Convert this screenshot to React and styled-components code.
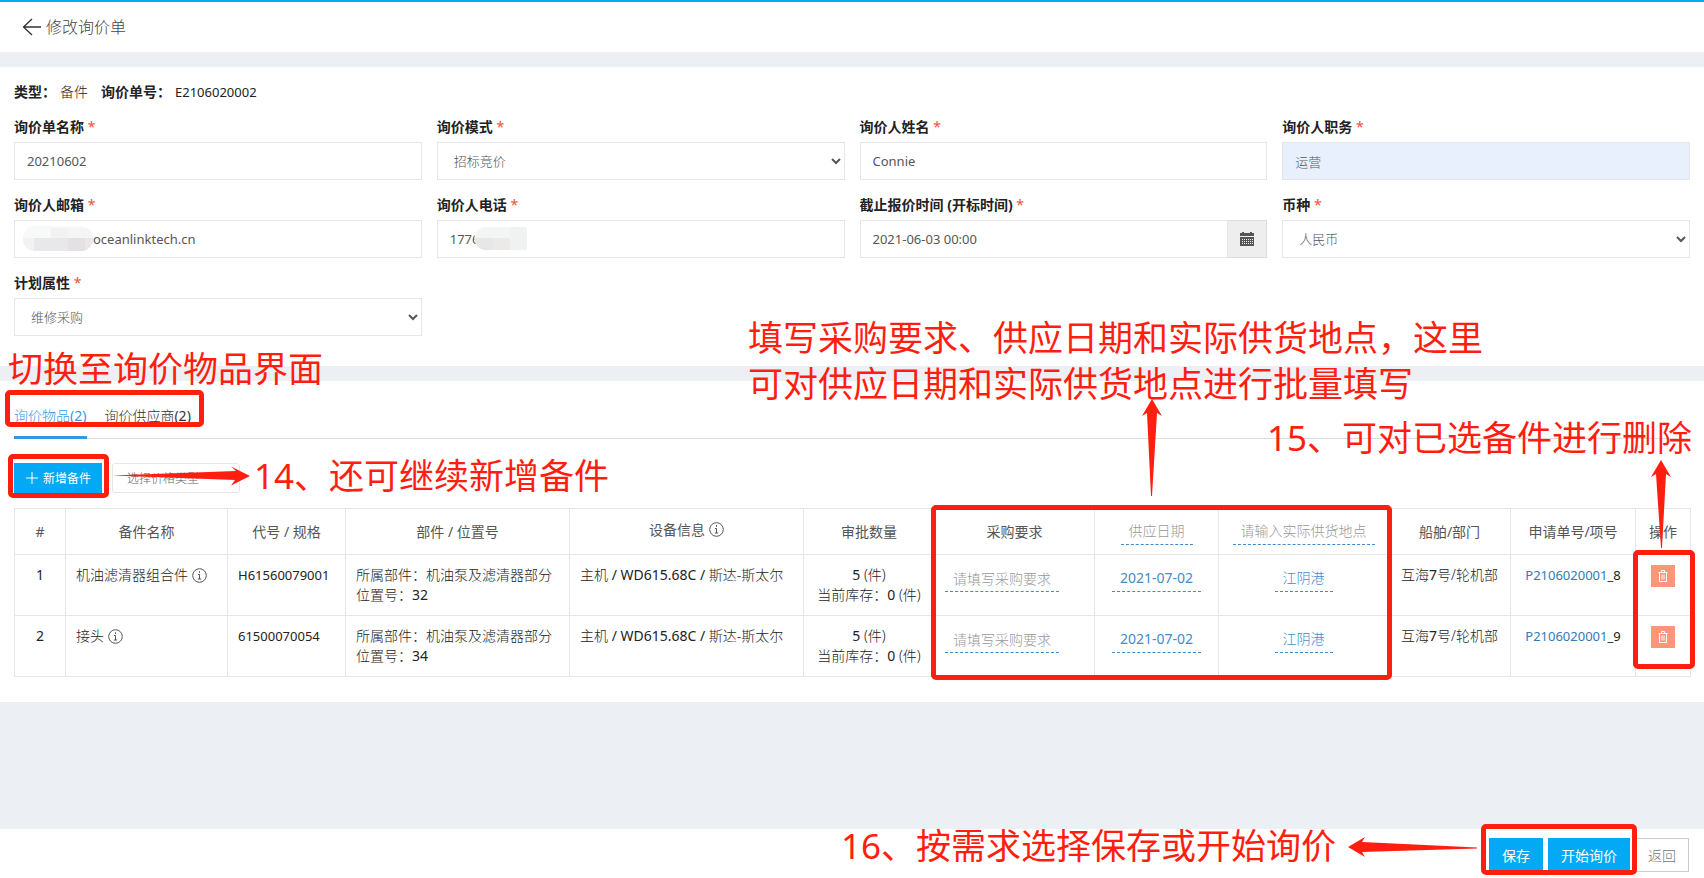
import React, { useState } from "react";
import styled, { createGlobalStyle } from "styled-components";

const RED = "#ff1e10";
const BLUE = "#03a9f4";

const GlobalStyle = createGlobalStyle`
    * {
        box-sizing: border-box;
    }
    body {
        margin: 0;
        background: #ecf0f5;
        color: #222;
        font: 14px/20px "Noto Sans", "Noto Sans CJK SC", sans-serif;
    }
    button, input, select {
        font-family: inherit;
    }
`;

const Page = styled.div`
    display: flex;
    flex-direction: column;
    gap: 15px;
    min-height: 100vh;
    overflow-x: hidden;
`;

const TopBar = styled.header`
    display: flex;
    align-items: center;
    gap: 5px;
    height: 52px;
    padding: 0 22px;
    border-top: 2px solid ${BLUE};
    background: #fff;
`;

const BackButton = styled.button`
    display: flex;
    padding: 0;
    border: 0;
    background: none;
    cursor: pointer;
`;

const Title = styled.h1`
    margin: 0;
    font-size: 16px;
    font-weight: 300;
    color: #444;
`;

const Panel = styled.section`
    position: relative;
    padding: ${(props) => props.$pad};
    background: #fff;
`;

const Summary = styled.dl`
    display: flex;
    align-items: center;
    gap: 4px;
    margin: 0 0 15px;
`;

const SummaryName = styled.dt`
    font-weight: 700;
`;

const SummaryValue = styled.dd`
    margin: 0 9px 0 0;
    font-size: ${(props) => (props.$code ? "13px" : "14px")};
    font-weight: ${(props) => (props.$code ? 400 : 300)};
`;

const FormGrid = styled.div`
    display: grid;
    grid-template-columns: repeat(4, 1fr);
    gap: 15px;
`;

const Field = styled.div`
    display: flex;
    flex-direction: column;
    gap: 5px;
`;

const Label = styled.label`
    font-weight: 700;
`;

const Star = styled.span`
    font-weight: 400;
    color: #f0523c;
`;

const Control = styled.div`
    position: relative;
    display: flex;
`;

const TextInput = styled.input`
    flex: 1;
    min-width: 0;
    height: 38px;
    padding: 0 12px 0 ${(props) => props.$indent || "12px"};
    border: 1px solid #e4e7ea;
    border-radius: 0;
    background: ${(props) => (props.$filled ? "#e8f0fe" : "#fff")};
    color: #565656;
    font-size: 13px;
    font-weight: ${(props) => (props.$filled ? 300 : 400)};
`;

const Select = styled.select`
    flex: 1;
    min-width: 0;
    height: 38px;
    padding: 0 12px;
    border: 1px solid #e4e7ea;
    border-radius: 0;
    background: #fff;
    color: #565656;
    font-size: 13px;
    font-weight: 300;
`;

const DateButton = styled.button`
    display: flex;
    align-items: center;
    justify-content: center;
    width: 39px;
    padding: 0;
    border: 1px solid #ddd;
    border-left: 0;
    background: #eee;
    color: #555;
`;

const Mask = styled.svg`
    position: absolute;
    top: 6px;
    left: ${(props) => props.$left};
`;

const Tabs = styled.nav`
    display: flex;
    gap: 17px;
    margin-bottom: 24px;
    box-shadow: inset 0 -1px #ddd;
`;

const Tab = styled.button`
    height: 34px;
    padding: 0 1px 9px 0;
    border: 0;
    border-bottom: 3px solid ${(props) => (props.$active ? "#3498e5" : "transparent")};
    background: none;
    color: ${(props) => (props.$active ? "#3498e5" : "#333")};
    font-size: 14px;
    font-weight: 300;
    line-height: 20px;
    cursor: pointer;
`;

const TabCount = styled.span`
    font-weight: 400;
`;

const Tools = styled.div`
    display: flex;
    gap: 10px;
    margin-bottom: 15px;
`;

const AddButton = styled.button`
    display: flex;
    align-items: center;
    gap: 5px;
    height: 30px;
    padding: 0 11px 0 12px;
    border: 0;
    background: ${BLUE};
    color: #fff;
    font-size: 12px;
`;

const PriceType = styled.select`
    appearance: none;
    width: 128px;
    height: 30px;
    padding: 0 14px;
    border: 1px solid #e4e7ea;
    border-radius: 3px;
    background: #fff;
    color: #666;
    font-size: 12px;
    font-weight: 300;
`;

const Table = styled.table`
    width: 100%;
    border-collapse: collapse;
    table-layout: fixed;
`;

const Th = styled.th`
    height: 46px;
    padding: 0;
    border: 1px solid #e4e7ea;
    color: #555;
    font-weight: 400;
    white-space: nowrap;
`;

const Td = styled.td`
    height: 61px;
    padding: 10px;
    border: 1px solid #e4e7ea;
    font-size: 14px;
    font-weight: 300;
    text-align: ${(props) => props.$align || "left"};
    vertical-align: top;
    white-space: nowrap;
`;

const Line = styled.div`
    display: flex;
    align-items: center;
    justify-content: ${(props) => (props.$center ? "center" : "flex-start")};
    gap: 4px;
    padding-bottom: ${(props) => (props.$center ? "4px" : 0)};
`;

const Code = styled.span`
    font-size: 13px;
    font-weight: 400;
`;

const Num = styled.span`
    font-weight: 400;
`;

const RefLink = styled.a`
    color: #337ab7;
    text-decoration: none;
`;

const Editable = styled.button`
    padding: 3px 8px;
    border: 0;
    border-bottom: 1px dashed #428bca;
    background: none;
    color: ${(props) => (props.$empty ? "#999" : "#428bca")};
    font-size: 14px;
    font-weight: ${(props) => (props.$light ? 300 : 400)};
    line-height: 20px;
    vertical-align: top;
`;

const EditInput = styled.input`
    display: block;
    width: 114px;
    padding: 3px 8px;
    border: 0;
    border-bottom: 1px dashed #428bca;
    background: none;
    font-size: 14px;
    font-weight: 300;
    line-height: 20px;
    height: 27px;

    &::placeholder {
        color: #999;
        opacity: 1;
    }
`;

const DeleteButton = styled.button`
    display: inline-flex;
    align-items: center;
    justify-content: center;
    width: 24px;
    height: 22px;
    padding: 0;
    border: 0;
    background: #fb9678;
    vertical-align: top;
`;

const Footer = styled.footer`
    position: relative;
    display: flex;
    justify-content: flex-end;
    align-items: center;
    gap: 5px;
    height: 49px;
    margin-top: auto;
    padding: 2px 15px 0;
    background: #fff;
`;

const FooterButton = styled.button`
    height: 34px;
    padding: 0 12px;
    border: 1px solid ${(props) => (props.$primary ? BLUE : "#ccc")};
    background: ${(props) => (props.$primary ? BLUE : "#fff")};
    color: ${(props) => (props.$primary ? "#fff" : "#777")};
    font-size: 14px;
    font-weight: ${(props) => (props.$primary ? 400 : 300)};
`;

// tutorial marks which lie over the page
const Frame = styled.div`
    position: absolute;
    top: ${(props) => props.$top};
    left: ${(props) => props.$left};
    right: ${(props) => props.$right};
    width: ${(props) => props.$width};
    height: ${(props) => props.$height};
    border: 5px solid ${RED};
    border-radius: 5px;
    pointer-events: none;
`;

const Note = styled.p`
    position: absolute;
    top: ${(props) => props.$top};
    left: ${(props) => props.$left};
    right: ${(props) => props.$right};
    margin: 0;
    color: ${RED};
    font-size: 35px;
    line-height: 46px;
    white-space: nowrap;
    pointer-events: none;
`;

const Arrow = styled.svg`
    position: absolute;
    top: ${(props) => props.$top};
    left: ${(props) => props.$left};
    right: ${(props) => props.$right};
    fill: ${RED};
    pointer-events: none;
`;

const InfoIcon = () => (
    <svg width="15" height="15" viewBox="0 0 15 15" fill="none" stroke="#555">
        <circle cx="7.5" cy="7.5" r="6.8" />
        <path d="M7.5 3.2v1.6M6 6.5h1.5v4.5M5.8 11h3.4" />
    </svg>
);

const TrashIcon = () => (
    <svg width="10" height="12" viewBox="0 0 10 12" fill="none" stroke="#fff">
        <path d="M0.5 2.5h9M3.5 2V.5h3V2M1.5 3v8.5h7V3M4 4.5v5M6 4.5v5" />
    </svg>
);

const CalendarIcon = () => (
    <svg width="14" height="14" viewBox="0 0 14 14">
        <path fill="#555" d="M0 1h2V0h2v1h6V0h2v1h2v3H0zM0 5h14v9H0z" />
        <path stroke="#eee" strokeDasharray="1 1" d="M2 7.5h11M2 9.5h11M2 11.5h11" />
    </svg>
);

const EmailMask = () => (
    <Mask $left="9px" width="70" height="25" viewBox="0 0 70 25">
        <clipPath id="email-mask"><rect width="70" height="25" rx="12" /></clipPath>
        <g clipPath="url(#email-mask)">
            <path fill="#f8f9f9" d="M0 0h70v25H0z" />
            <path fill="#f2f2f3" d="M28 2h17v10H28zM0 12h11v13H0z" />
            <path fill="#f5f5f6" d="M45 2h25v10H45z" />
            <path fill="#e8e7e9" d="M11 12h59v13H11z" />
            <path fill="#e3e1e4" d="M45 12h17v13H45z" />
        </g>
    </Mask>
);

const PhoneMask = () => (
    <Mask $left="37px" width="53" height="25" viewBox="0 0 53 25">
        <clipPath id="phone-mask"><path d="M12 1h39a2 2 0 0 1 2 2v19a2 2 0 0 1-2 2H12a11.5 11.5 0 0 1 0-23z" /></clipPath>
        <g clipPath="url(#phone-mask)">
            <path fill="#f3f4f4" d="M0 0h53v25H0z" />
            <path fill="#e6e8e8" d="M0 12h19v13H0z" />
            <path fill="#ebeae9" d="M19 12h17v13H19z" />
            <path fill="#f0f1f1" d="M36 0h17v25H36z" />
        </g>
    </Mask>
);

const fields = [
    { id: "name", label: "询价单名称", value: "20210602" },
    { id: "mode", label: "询价模式", type: "select", value: "招标竞价" },
    { id: "person", label: "询价人姓名", value: "Connie" },
    { id: "job", label: "询价人职务", value: "运营", filled: true },
    { id: "email", label: "询价人邮箱", value: "oceanlinktech.cn", indent: "78px", mask: <EmailMask /> },
    { id: "phone", label: "询价人电话", value: "1776", mask: <PhoneMask /> },
    { id: "deadline", label: "截止报价时间 (开标时间)", type: "date", value: "2021-06-03 00:00" },
    { id: "currency", label: "币种", type: "select", value: "人民币" },
    { id: "plan", label: "计划属性", type: "select", value: "维修采购" },
];

const columns = [51, 162, 118, 224, 234, 131, 160, 124, 170, 122, 125, 55];

const items = [
    { id: 1, name: "机油滤清器组合件", code: "H61560079001", position: "32", line: "8" },
    { id: 2, name: "接头", code: "61500070054", position: "34", line: "9" },
];

const FormField = ({ field }) => (
    <Field>
        <Label htmlFor={field.id}>{field.label} <Star>*</Star></Label>
        <Control>
            {field.type === "select" ? (
                <Select id={field.id}>
                    <option>{field.value}</option>
                </Select>
            ) : (
                <TextInput id={field.id} defaultValue={field.value} $filled={field.filled} $indent={field.indent} />
            )}
            {field.type === "date" && <DateButton aria-label="选择日期"><CalendarIcon /></DateButton>}
            {field.mask}
        </Control>
    </Field>
);

const ItemRow = ({ item }) => (
    <tr>
        <Td $align="center"><Num>{item.id}</Num></Td>
        <Td><Line>{item.name}<InfoIcon /></Line></Td>
        <Td><Code>{item.code}</Code></Td>
        <Td>
            所属部件：机油泵及滤清器部分<br />
            位置号：<Num>{item.position}</Num>
        </Td>
        <Td>主机 <Num>/ WD615.68C /</Num> 斯达-斯太尔</Td>
        <Td $align="center">
            <Num>5</Num> (件)<br />
            当前库存：<Num>0</Num> (件)
        </Td>
        <Td><EditInput placeholder="请填写采购要求" aria-label="采购要求" /></Td>
        <Td $align="center"><Editable>2021-07-02</Editable></Td>
        <Td $align="center"><Editable $light>江阴港</Editable></Td>
        <Td $align="center">互海<Num>7</Num>号/轮机部</Td>
        <Td $align="center">
            <Code><RefLink href="#order">P2106020001</RefLink>_{item.line}</Code>
        </Td>
        <Td $align="center"><DeleteButton aria-label="删除"><TrashIcon /></DeleteButton></Td>
    </tr>
);

const App = () => {
    const [tab, setTab] = useState("items");

    return <Page>
        <GlobalStyle />
        <TopBar>
            <BackButton aria-label="返回">
                <svg width="19" height="18" viewBox="0 0 19 18" fill="none" stroke="#333" strokeWidth="1.3">
                    <path d="M10 1L1.5 9L10 17M1.5 9H19" />
                </svg>
            </BackButton>
            <Title>修改询价单</Title>
        </TopBar>

        <Panel $pad="15px 14px 30px">
            <Summary>
                <SummaryName>类型：</SummaryName>
                <SummaryValue>备件</SummaryValue>
                <SummaryName>询价单号：</SummaryName>
                <SummaryValue $code>E2106020002</SummaryValue>
            </Summary>
            <FormGrid>
                {fields.map((field) => <FormField key={field.id} field={field} />)}
            </FormGrid>
        </Panel>

        <Panel $pad="24px 14px 25px">
            <Tabs>
                <Tab $active={tab === "items"} onClick={() => setTab("items")}>询价物品<TabCount>(2)</TabCount></Tab>
                <Tab $active={tab === "suppliers"} onClick={() => setTab("suppliers")}>询价供应商<TabCount>(2)</TabCount></Tab>
            </Tabs>
            <Tools>
                <AddButton>
                    <svg width="12" height="12" viewBox="0 0 12 12" stroke="#fff"><path d="M6 0v12M0 6h12" /></svg>
                    新增备件
                </AddButton>
                <PriceType aria-label="价格类型">
                    <option>选择价格类型</option>
                </PriceType>
            </Tools>
            <Table>
                <colgroup>
                    {columns.map((width, i) => <col key={i} width={width} />)}
                </colgroup>
                <thead>
                    <tr>
                        <Th>#</Th>
                        <Th>备件名称</Th>
                        <Th>代号 / 规格</Th>
                        <Th>部件 / 位置号</Th>
                        <Th><Line $center>设备信息<InfoIcon /></Line></Th>
                        <Th>审批数量</Th>
                        <Th>采购要求</Th>
                        <Th><Editable $empty $light>供应日期</Editable></Th>
                        <Th><Editable $empty $light>请输入实际供货地点</Editable></Th>
                        <Th>船舶/部门</Th>
                        <Th>申请单号/项号</Th>
                        <Th>操作</Th>
                    </tr>
                </thead>
                <tbody>
                    {items.map((item) => <ItemRow key={item.id} item={item} />)}
                </tbody>
            </Table>

            <Note $top="-35px" $left="8px">切换至询价物品界面</Note>
            <Frame $top="9px" $left="5px" $width="199px" $height="37px" />
            <Frame $top="73px" $left="8px" $width="101px" $height="44px" />
            <Arrow $top="85px" $left="112px" width="138" height="20">
                <path d="M0 9.5L124 5L119 0.5L138 10L119 19.5L123 14Z" />
            </Arrow>
            <Note $top="72px" $left="254px">14、还可继续新增备件</Note>
            <Note $top="-66px" $left="748px">
                填写采购要求、供应日期和实际供货地点，这里<br />
                可对供应日期和实际供货地点进行批量填写
            </Note>
            <Arrow $top="18px" $left="1142px" width="20" height="97">
                <path d="M10 0L20 17L15 14L10 97H9L5 14L0 17Z" />
            </Arrow>
            <Frame $top="124px" $left="931px" $width="461px" $height="175px" />
            <Note $top="34px" $right="12px">15、可对已选备件进行删除</Note>
            <Arrow $top="79px" $right="33px" width="20" height="88">
                <path d="M10 0L20 17L15 14L11 88H10L5 14L0 17Z" />
            </Arrow>
            <Frame $top="169px" $right="9px" $width="62px" $height="119px" />
        </Panel>

        <Footer>
            <FooterButton $primary>保存</FooterButton>
            <FooterButton $primary>开始询价</FooterButton>
            <FooterButton>返回</FooterButton>
            <Note $top="-6px" $right="368px">16、按需求选择保存或开始询价</Note>
            <Arrow $top="8px" $right="227px" width="129" height="20">
                <path d="M0 10L17 0L14 5L129 10.5V11.5L14 15L17 20Z" />
            </Arrow>
            <Frame $top="-5px" $right="67px" $width="156px" $height="51px" />
        </Footer>
    </Page>
};

export default App;
